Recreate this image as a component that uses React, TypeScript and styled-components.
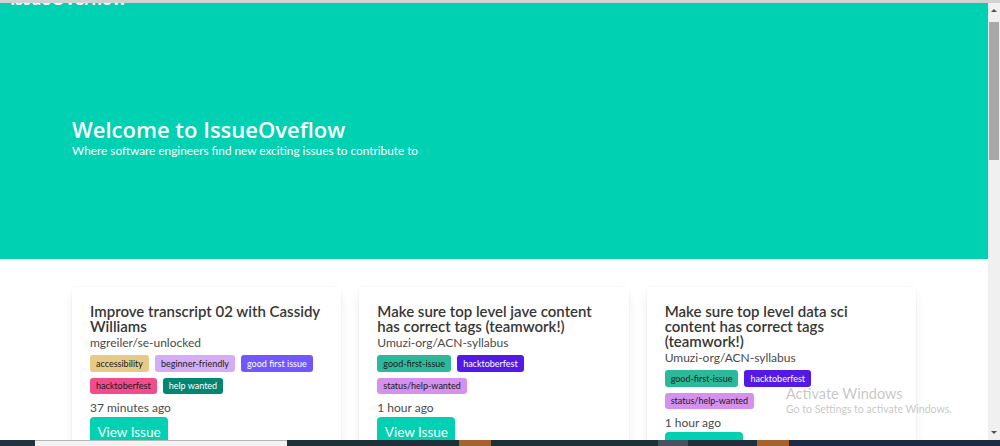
import React from "react";
import styled, { createGlobalStyle } from "styled-components";

type Tag = { label: string; bg: string; fg: string };
type Issue = { title: string; repo: string; tagRows: Tag[][]; age: string };

const goodFirst: Tag = { label: "good-first-issue", bg: "#2bb99a", fg: "#1a1a1a" };
const hackPurple: Tag = { label: "hacktoberfest", bg: "#5319e7", fg: "#ffffff" };
const statusHelp: Tag = { label: "status/help-wanted", bg: "#d690ee", fg: "#1a1a1a" };

const issues: Issue[] = [
	{
		title: "Improve transcript 02 with Cassidy Williams",
		repo: "mgreiler/se-unlocked",
		tagRows: [
			[
				{ label: "accessibility", bg: "#e6cb86", fg: "#1a1a1a" },
				{ label: "beginner-friendly", bg: "#d5adf7", fg: "#1a1a1a" },
				{ label: "good first issue", bg: "#7057ff", fg: "#ffffff" },
			],
			[
				{ label: "hacktoberfest", bg: "#f24c8c", fg: "#1a1a1a" },
				{ label: "help wanted", bg: "#008672", fg: "#ffffff" },
			],
		],
		age: "37 minutes ago",
	},
	{
		title: "Make sure top level jave content has correct tags (teamwork!)",
		repo: "Umuzi-org/ACN-syllabus",
		tagRows: [[goodFirst, hackPurple], [statusHelp]],
		age: "1 hour ago",
	},
	{
		title: "Make sure top level data sci content has correct tags (teamwork!)",
		repo: "Umuzi-org/ACN-syllabus",
		tagRows: [[goodFirst, hackPurple], [statusHelp]],
		age: "1 hour ago",
	},
];

const taskbarParts = [
	{ w: 35, c: "#22333d" },
	{ w: 252, c: "#f2f2f2", light: true },
	{ w: 172, c: "#1f3039" },
	{ w: 32, c: "#a5622f" },
	{ w: 167, c: "#1f3039" },
	{ w: 30, c: "#46525e" },
	{ w: 69, c: "#1f2f3d" },
	{ w: 32, c: "#a5622f" },
	{ w: 211, c: "#1c2a42" },
];

const App: React.FC = () => {
	return (
		<>
			<GlobalStyle />
			<Screen>
				<TopLine />
				<Body>
					<Page>
						<Hero>
							<BrandStrip>
								<Brand>IssueOverflow</Brand>
							</BrandStrip>
							<Container>
								<HeroTitle>Welcome to IssueOveflow</HeroTitle>
								<HeroSubtitle>
									Where software engineers find new exciting issues to contribute to
								</HeroSubtitle>
							</Container>
						</Hero>
						<Section>
							<Container>
								<CardGrid>
									{issues.map((issue, i) => (
										<Card key={i}>
											<CardTitle>{issue.title}</CardTitle>
											<Repo>{issue.repo}</Repo>
											<Tags>
												{issue.tagRows.map((row, r) => (
													<TagRow key={r}>
														{row.map((t) => (
															<TagPill key={t.label} $bg={t.bg} $fg={t.fg}>
																{t.label}
															</TagPill>
														))}
													</TagRow>
												))}
											</Tags>
											<Age>{issue.age}</Age>
											<ViewButton>View Issue</ViewButton>
										</Card>
									))}
								</CardGrid>
							</Container>
						</Section>
					</Page>
					<Scrollbar>
						<ArrowUp />
						<Track>
							<Thumb />
						</Track>
						<ArrowDown />
					</Scrollbar>
				</Body>
				<Taskbar>
					{taskbarParts.map((p, i) => (
						<TaskPart key={i} $w={p.w} $c={p.c} $light={!!p.light} />
					))}
				</Taskbar>
				<Watermark>
					<WatermarkTitle>Activate Windows</WatermarkTitle>
					<WatermarkText>Go to Settings to activate Windows.</WatermarkText>
				</Watermark>
			</Screen>
		</>
	);
};

// ---------- styles ----------
const GlobalStyle = createGlobalStyle`
	html, body {
		margin: 0;
		padding: 0;
		overflow: hidden;
		background: #ffffff;
		font-family: Lato, "Open Sans", "Noto Sans", sans-serif;
	}
	* { box-sizing: border-box; }
`;

const Screen = styled.div`
	position: relative;
	height: 100vh;
	display: flex;
	flex-direction: column;
	overflow: hidden;
`;

const TopLine = styled.div`
	height: 3px;
	background: #d2d2d2;
	flex-shrink: 0;
`;

const Body = styled.div`
	flex: 1;
	min-height: 0;
	display: flex;
`;

const Page = styled.main`
	flex: 1;
	overflow: hidden;
	background: #ffffff;
`;

const Hero = styled.section`
	height: 256px;
	background: #00d1b2;
	color: #ffffff;
`;

const BrandStrip = styled.div`
	height: 3px;
	overflow: hidden;
	display: flex;
	align-items: flex-end;
	padding-left: 10px;
	margin-bottom: 111px;
`;

const Brand = styled.span`
	display: block;
	font-size: 18px;
	line-height: 16px;
	font-weight: 700;
	color: #ffffff;
`;

const Container = styled.div`
	width: 844px;
	margin: 0 auto;
`;

const HeroTitle = styled.h1`
	margin: 0;
	font-family: "Open Sans", Lato, sans-serif;
	font-size: 22px;
	line-height: 24px;
	font-weight: 600;
`;

const HeroSubtitle = styled.p`
	margin: 2px 0 0;
	font-size: 11.8px;
	line-height: 16px;
`;

const Section = styled.section`
	padding-top: 28px;
`;

const CardGrid = styled.div`
	display: grid;
	grid-template-columns: repeat(3, 1fr);
	gap: 18px;
	align-items: start;
`;

const Card = styled.div`
	background: #ffffff;
	border-radius: 4px;
	padding: 17px 18px 20px;
	box-shadow: 0 6px 12px -2px rgba(10, 10, 10, 0.1), 0 0 0 1px rgba(10, 10, 10, 0.02);
`;

const CardTitle = styled.h2`
	margin: 0;
	font-size: 15px;
	line-height: 15px;
	font-weight: 600;
	color: #363636;
`;

const Repo = styled.div`
	margin-top: 1px;
	font-size: 12px;
	line-height: 16px;
	color: #4a4a4a;
`;

const Tags = styled.div`
	display: flex;
	flex-direction: column;
	gap: 6px;
	margin-top: 4px;
`;

const TagRow = styled.div`
	display: flex;
	gap: 6px;
`;

const TagPill = styled.span<{ $bg: string; $fg: string }>`
	display: inline-flex;
	align-items: center;
	height: 16.5px;
	padding: 0 6px;
	border-radius: 3px;
	font-size: 9px;
	white-space: nowrap;
	background: ${({ $bg }) => $bg};
	color: ${({ $fg }) => $fg};
`;

const Age = styled.div`
	margin-top: 6px;
	font-size: 12px;
	line-height: 16px;
	color: #4a4a4a;
`;

const ViewButton = styled.button`
	display: block;
	margin-top: 1px;
	width: 78px;
	height: 30px;
	border: none;
	border-radius: 4px;
	background: #00d1b2;
	color: #ffffff;
	font-family: inherit;
	font-size: 13.5px;
	padding: 0;
	cursor: pointer;
`;

const Scrollbar = styled.div`
	width: 12px;
	background: #f0f0f0;
	display: flex;
	flex-direction: column;
	align-items: center;
`;

const ArrowUp = styled.div`
	margin-top: 6px;
	margin-bottom: 10px;
	width: 0;
	height: 0;
	border-left: 3.5px solid transparent;
	border-right: 3.5px solid transparent;
	border-bottom: 3.5px solid #505050;
`;

const ArrowDown = styled.div`
	margin: 8px 0 6px;
	width: 0;
	height: 0;
	border-left: 3.5px solid transparent;
	border-right: 3.5px solid transparent;
	border-top: 3.5px solid #505050;
`;

const Track = styled.div`
	flex: 1;
	width: 100%;
	padding: 0 1px;
`;

const Thumb = styled.div`
	height: 138px;
	background: #a8a8a8;
`;

const Taskbar = styled.footer`
	height: 6px;
	display: flex;
	flex-shrink: 0;
`;

const TaskPart = styled.div<{ $w: number; $c: string; $light: boolean }>`
	flex: ${({ $w }) => `0 0 ${$w}px`};
	background: ${({ $c }) => $c};
	border-top: ${({ $light }) => ($light ? "1px solid #b5b5b5" : "none")};
	&:last-child {
		flex: 1;
	}
`;

const Watermark = styled.div`
	position: absolute;
	left: 786px;
	top: 385px;
	color: rgba(150, 150, 150, 0.55);
	pointer-events: none;
`;

const WatermarkTitle = styled.div`
	font-size: 14.5px;
	line-height: 17px;
`;

const WatermarkText = styled.div`
	font-size: 10.5px;
	line-height: 14px;
`;

export default App;
